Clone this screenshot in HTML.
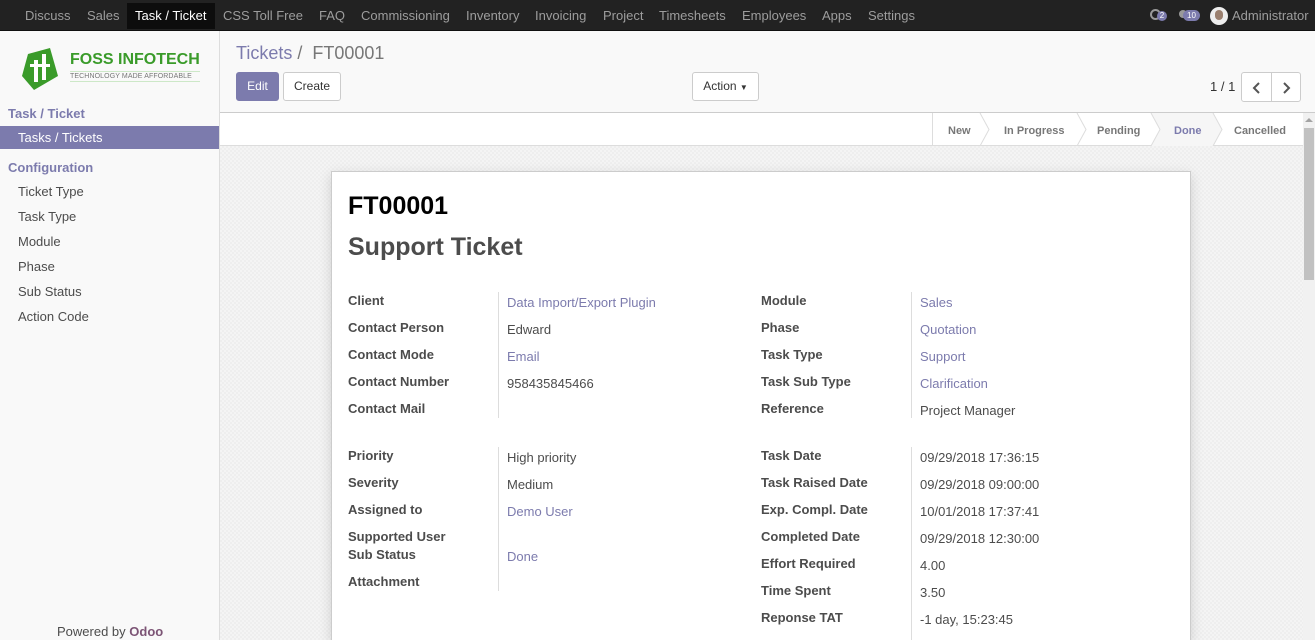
<!DOCTYPE html>
<html><head><style>
*{margin:0;padding:0;box-sizing:border-box}
html,body{width:1315px;height:640px;overflow:hidden}
body{font-family:"Liberation Sans",sans-serif;font-size:13px;color:#4c4c4c;background:#fff;position:relative}
.a{position:absolute;white-space:nowrap}
#nav{position:absolute;left:0;top:0;width:1315px;height:31px;background:#222;border-bottom:1px solid #111}
#nav span{position:absolute;top:8px;color:#9d9d9d;font-size:13px}
#side{position:absolute;left:0;top:31px;width:220px;height:609px;background:#f9f9f9;border-right:1px solid #ddd}
#cp{position:absolute;left:220px;top:31px;width:1095px;height:82px;background:#f9f9f9;border-bottom:1px solid #ccc}
#sb{position:absolute;left:220px;top:113px;width:1083px;height:33px;background:#fff;border-bottom:1px solid #ddd}
#bg{position:absolute;left:220px;top:146px;width:1083px;height:494px;background-color:#f4f4f4;background-image:linear-gradient(45deg,#eee 25%,transparent 25%,transparent 75%,#eee 75%),linear-gradient(45deg,#eee 25%,transparent 25%,transparent 75%,#eee 75%);background-size:4px 4px;background-position:0 0,2px 2px}
#sheet{position:absolute;left:331px;top:171px;width:860px;height:469px;background:#fff;border:1px solid #ccc;border-bottom:0;box-shadow:0 4px 12px rgba(0,0,0,.15)}
.l{position:absolute;font-weight:bold;color:#4c4c4c}
.v{position:absolute;color:#4c4c4c}
.p{color:#7c7bad}
.btn{position:absolute;border:1px solid #ccc;background:#fff;border-radius:3px;text-align:center}
.st{position:absolute;top:124px;font-weight:bold;font-size:11px;color:#777}
</style></head><body>
<div id="nav">
<span style="left:25px">Discuss</span>
<span style="left:87px">Sales</span>
<div class="a" style="left:127px;top:3px;width:88px;height:26px;background:#0d0d0d"></div>
<span style="left:135px;color:#fff">Task / Ticket</span>
<span style="left:223px">CSS Toll Free</span>
<span style="left:319px">FAQ</span>
<span style="left:361px">Commissioning</span>
<span style="left:466px">Inventory</span>
<span style="left:535px">Invoicing</span>
<span style="left:603px">Project</span>
<span style="left:659px">Timesheets</span>
<span style="left:742px">Employees</span>
<span style="left:822px">Apps</span>
<span style="left:868px">Settings</span>
<div class="a" style="left:1150px;top:9px;width:11px;height:11px;border:2px solid #999;border-radius:50%"></div>
<div class="a" style="left:1157px;top:11px;width:10px;height:10px;background:#7c7bad;border-radius:5px;color:#fff;font-size:8px;text-align:center;line-height:10px">2</div>
<div class="a" style="left:1179px;top:10px;width:8px;height:8px;background:#999;border-radius:50%"></div>
<div class="a" style="left:1183px;top:10px;width:17px;height:11px;background:#7c7bad;border-radius:6px;color:#fff;font-size:8px;text-align:center;line-height:11px">10</div>
<div class="a" style="left:1210px;top:7px;width:18px;height:18px;background:#eee;border-radius:50%;overflow:hidden"><div style="margin:3px auto 0;width:8px;height:10px;background:#9a7f6e;border-radius:4px"></div></div>
<span style="left:1232px">Administrator</span>
</div>
<div id="side">
<svg class="a" style="left:20px;top:15px" width="40" height="45" viewBox="0 0 40 45"><path d="M8 8 L30 2 L38 30 L14 44 L2 30 Z" fill="#3a9b2a"/><path d="M14 14h4v22h-4zM22 8h4v26h-4zM10 18h20v3H10z" fill="#fff"/></svg>
<div class="a" style="left:70px;top:20px;color:#3a9b2a;font-weight:bold;font-size:16px">FOSS INFOTECH</div>
<div class="a" style="left:70px;top:40px;width:130px;border-top:1px solid #cde8c8;border-bottom:1px solid #cde8c8;font-size:7px;color:#777;padding:1px 0;letter-spacing:.1px">TECHNOLOGY MADE AFFORDABLE</div>
<div class="a" style="left:8px;top:75px;color:#7c7bad;font-weight:bold">Task / Ticket</div>
<div class="a" style="left:0;top:95px;width:219px;height:23px;background:#7c7bad"></div>
<div class="a" style="left:18px;top:99px;color:#fff">Tasks / Tickets</div>
<div class="a" style="left:8px;top:129px;color:#7c7bad;font-weight:bold">Configuration</div>
<div class="a" style="left:18px;top:153px">Ticket Type</div>
<div class="a" style="left:18px;top:178px">Task Type</div>
<div class="a" style="left:18px;top:203px">Module</div>
<div class="a" style="left:18px;top:228px">Phase</div>
<div class="a" style="left:18px;top:253px">Sub Status</div>
<div class="a" style="left:18px;top:278px">Action Code</div>
<div class="a" style="left:57px;top:593px">Powered by <b style="color:#7c5475">Odoo</b></div>
</div>
<div id="cp">
<div class="a" style="left:16px;top:12px;font-size:18px;color:#777"><span class="p">Tickets</span> /&nbsp; FT00001</div>
<div class="btn" style="left:16px;top:41px;width:43px;height:29px;background:#7c7bad;border-color:#7c7bad;color:#fff;line-height:27px;font-size:12px">Edit</div>
<div class="btn" style="left:63px;top:41px;width:58px;height:29px;line-height:27px;font-size:12px;color:#333">Create</div>
<div class="btn" style="left:472px;top:41px;width:67px;height:29px;line-height:27px;font-size:12px;color:#333">Action <span style="font-size:8px">▼</span></div>
<div class="a" style="left:990px;top:48px;color:#333">1 / 1</div>
<div class="btn" style="left:1021px;top:41px;width:60px;height:30px"><div style="position:absolute;left:29px;top:0;height:28px;border-left:1px solid #ccc"></div>
<svg class="a" style="left:10px;top:9px" width="10" height="12"><path d="M7 1L2 6L7 11" stroke="#555" stroke-width="2" fill="none"/></svg>
<svg class="a" style="left:39px;top:9px" width="10" height="12"><path d="M3 1L8 6L3 11" stroke="#555" stroke-width="2" fill="none"/></svg></div>
</div>
<div id="sb">
<svg class="a" style="left:712px;top:0" width="371" height="33"><path d="M219 0L281 0L290 16.5L281 33L219 33L228 16.5Z" fill="#f6f6f6"/><g stroke="#ddd" fill="none"><path d="M0.5 0V33"/><path d="M48 0L57 16.5L48 33"/><path d="M145 0L154 16.5L145 33"/><path d="M219 0L228 16.5L219 33"/><path d="M281 0L290 16.5L281 33"/></g></svg>
</div>
<div class="st" style="left:948px;top:125px">New</div>
<div class="st" style="left:1004px;top:125px">In Progress</div>
<div class="st" style="left:1097px;top:125px">Pending</div>
<div class="st" style="left:1174px;top:125px;color:#7c7bad">Done</div>
<div class="st" style="left:1234px;top:125px">Cancelled</div>
<div id="bg"></div>
<div class="a" style="left:1303px;top:113px;width:12px;height:527px;background:#f1f1f1"></div>
<div class="a" style="left:1304px;top:128px;width:10px;height:152px;background:#c1c1c1"></div>
<div class="a" style="left:1305px;top:118px;width:0;height:0;border:4px solid transparent;border-bottom-color:#a3a3a3;border-top:0"></div>
<div id="sheet"></div>
<div class="a" style="left:348px;top:192px;font-size:25px;font-weight:bold;color:#000">FT00001</div>
<div class="a" style="left:348px;top:233px;font-size:25px;font-weight:bold;color:#4c4c4c">Support Ticket</div>
<div class="a" style="left:498px;top:292px;height:126px;border-left:1px solid #ddd"></div>
<div class="a" style="left:911px;top:292px;height:126px;border-left:1px solid #ddd"></div>
<div class="a" style="left:498px;top:447px;height:144px;border-left:1px solid #ddd"></div>
<div class="a" style="left:911px;top:447px;height:193px;border-left:1px solid #ddd"></div>
<div class="l" style="left:348px;top:293px">Client</div><div class="v p" style="left:507px;top:295px">Data Import/Export Plugin</div>
<div class="l" style="left:348px;top:320px">Contact Person</div><div class="v" style="left:507px;top:322px">Edward</div>
<div class="l" style="left:348px;top:347px">Contact Mode</div><div class="v p" style="left:507px;top:349px">Email</div>
<div class="l" style="left:348px;top:374px">Contact Number</div><div class="v" style="left:507px;top:376px">958435845466</div>
<div class="l" style="left:348px;top:401px">Contact Mail</div>
<div class="l" style="left:761px;top:293px">Module</div><div class="v p" style="left:920px;top:295px">Sales</div>
<div class="l" style="left:761px;top:320px">Phase</div><div class="v p" style="left:920px;top:322px">Quotation</div>
<div class="l" style="left:761px;top:347px">Task Type</div><div class="v p" style="left:920px;top:349px">Support</div>
<div class="l" style="left:761px;top:374px">Task Sub Type</div><div class="v p" style="left:920px;top:376px">Clarification</div>
<div class="l" style="left:761px;top:401px">Reference</div><div class="v" style="left:920px;top:403px">Project Manager</div>
<div class="l" style="left:348px;top:448px">Priority</div><div class="v" style="left:507px;top:450px">High priority</div>
<div class="l" style="left:348px;top:475px">Severity</div><div class="v" style="left:507px;top:477px">Medium</div>
<div class="l" style="left:348px;top:502px">Assigned to</div><div class="v p" style="left:507px;top:504px">Demo User</div>
<div class="l" style="left:348px;top:529px">Supported User</div>
<div class="l" style="left:348px;top:547px">Sub Status</div><div class="v p" style="left:507px;top:549px">Done</div>
<div class="l" style="left:348px;top:574px">Attachment</div>
<div class="l" style="left:761px;top:448px">Task Date</div><div class="v" style="left:920px;top:450px">09/29/2018 17:36:15</div>
<div class="l" style="left:761px;top:475px">Task Raised Date</div><div class="v" style="left:920px;top:477px">09/29/2018 09:00:00</div>
<div class="l" style="left:761px;top:502px">Exp. Compl. Date</div><div class="v" style="left:920px;top:504px">10/01/2018 17:37:41</div>
<div class="l" style="left:761px;top:529px">Completed Date</div><div class="v" style="left:920px;top:531px">09/29/2018 12:30:00</div>
<div class="l" style="left:761px;top:556px">Effort Required</div><div class="v" style="left:920px;top:558px">4.00</div>
<div class="l" style="left:761px;top:583px">Time Spent</div><div class="v" style="left:920px;top:585px">3.50</div>
<div class="l" style="left:761px;top:610px">Reponse TAT</div><div class="v" style="left:920px;top:612px">-1 day, 15:23:45</div>
</body></html>
